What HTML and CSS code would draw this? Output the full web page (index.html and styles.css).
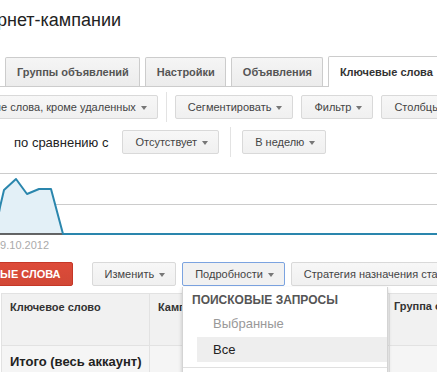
FILE: index.html
```html
<!DOCTYPE html>
<html lang="ru">
<head>
    <meta charset="UTF-8">
    <meta name="viewport" content="width=device-width, initial-scale=1.0">
    <title>Интернет-кампании - Ключевые слова</title>
    <link rel="stylesheet" href="styles.css">
</head>
<body>
    <div class="page">
        <h1 class="title">Интернет-кампании</h1>

        <nav class="tabs">
            <span class="tab tab-cut">Кампании</span>
            <span class="tab">Группы объявлений</span>
            <span class="tab">Настройки</span>
            <span class="tab">Объявления</span>
            <span class="tab active">Ключевые слова</span>
        </nav>

        <div class="toolbar filters">
            <button class="btn btn-status">Все ключевые слова, кроме удаленных <i class="caret"></i></button>
            <span class="sep"></span>
            <button class="btn">Сегментировать <i class="caret"></i></button>
            <button class="btn">Фильтр <i class="caret"></i></button>
            <button class="btn">Столбцы <i class="caret"></i></button>
        </div>

        <div class="toolbar compare">
            <span class="label">по сравнению с</span>
            <button class="btn">Отсутствует <i class="caret"></i></button>
            <span class="sep"></span>
            <button class="btn">В неделю <i class="caret"></i></button>
        </div>

        <div class="chart">
            <svg width="437" height="80" viewBox="0 0 437 80">
                <line x1="0" y1="15.5" x2="437" y2="15.5" stroke="#cccccc" stroke-width="1"/>
                <line x1="0" y1="46.5" x2="437" y2="46.5" stroke="#cccccc" stroke-width="1"/>
                <polygon points="-2,60 0,49 4,32 16,21 27,36 39,31 51,31 63,76 -2,76" fill="#e3f0f7"/>
                <line x1="0" y1="76" x2="63" y2="76" stroke="#333333" stroke-width="1.5"/>
                <polyline points="-2,60 0,49 4,32 16,21 27,36 39,31 51,31 63,76 437,76" fill="none" stroke="#2a86ad" stroke-width="2" stroke-linejoin="round"/>
            </svg>
            <div class="chart-date">09.10.2012</div>
        </div>

        <div class="toolbar actions">
            <button class="btn btn-red">+ Ключевые слова</button>
            <button class="btn">Изменить <i class="caret"></i></button>
            <button class="btn btn-open">Подробности <i class="caret"></i></button>
            <button class="btn">Стратегия назначения ставок <i class="caret"></i></button>
        </div>

        <div class="grid-wrap">
            <table class="grid">
                <thead>
                    <tr>
                        <th class="col-kw">Ключевое слово</th>
                        <th class="col-camp">Кампания</th>
                        <th class="col-group">Группа объявлений</th>
                    </tr>
                </thead>
                <tbody>
                    <tr class="total">
                        <td class="col-kw">Итого (весь аккаунт) <span class="help">?</span></td>
                        <td class="col-camp"></td>
                        <td class="col-group"></td>
                    </tr>
                </tbody>
            </table>

            <div class="menu">
                <div class="menu-head">Поисковые запросы</div>
                <div class="menu-item disabled">Выбранные</div>
                <div class="menu-item hover">Все</div>
                <div class="menu-line"></div>
            </div>
        </div>
    </div>
</body>
</html>
```

FILE: styles.css
```css
html, body { margin: 0; padding: 0; background: #fff; overflow: hidden; }
body { font-family: "Liberation Sans", Arial, sans-serif; color: #222; width: 437px; height: 372px; }
.page { width: 437px; overflow: hidden; }

.title { font-size: 18px; font-weight: normal; line-height: 22px; margin: 9px 0 0 -44px; white-space: nowrap; color: #222; }

.tabs { display: flex; gap: 5px; margin-top: 25px; height: 30px; border-bottom: 1px solid #cccccc; white-space: nowrap; }
.tab { flex-shrink: 0; box-sizing: border-box; height: 29px; margin-top: 1px; padding: 0 10px 0 11px; line-height: 28px; font-size: 11px; font-weight: bold; color: #555; background: linear-gradient(#f5f5f5, #ececec); border: 1px solid #cccccc; border-bottom: none; border-radius: 2px 2px 0 0; }
.tab-cut { margin-left: -77px; width: 77px; overflow: hidden; text-indent: 30px; }
.tab.active { background: #fff; color: #333; height: 31px; margin-top: 0; line-height: 30px; }

.toolbar { display: flex; align-items: center; white-space: nowrap; }
.filters { margin-top: 8px; gap: 8px; }
.compare { margin-top: 11px; gap: 11px; }

.btn { flex-shrink: 0; box-sizing: border-box; height: 24px; padding: 0 10px 0 12px; font-family: inherit; font-size: 11px; color: #444; background: linear-gradient(#f7f7f7, #f0f0f0); border: 1px solid #d9d9d9; border-radius: 2px; display: flex; align-items: center; gap: 5px; }
.btn-status { margin-left: -79px; }
.caret { display: inline-block; width: 0; height: 0; border-top: 4px solid #777; border-left: 3.5px solid transparent; border-right: 3.5px solid transparent; margin-top: 1px; }
.sep { flex-shrink: 0; width: 1px; height: 30px; margin: -3px 0; background: #e3e3e3; }
.label { font-size: 13px; color: #222; margin: 0 3px 0 14px; }

.chart { margin-top: 4px; }
.chart svg { display: block; }
.chart-date { font-size: 11px; color: #aaa; margin-left: -6px; line-height: 14px; }

.actions { margin-top: 10px; gap: 6px; }
.btn-red { margin-left: -71px; margin-right: 13px; color: #fff; font-weight: bold; text-transform: uppercase; background: linear-gradient(#dd4b39, #d14836); border-color: #c53727; padding: 0 11px 0 12px; }
.btn-open { border-color: #7ba3e0; background: #f1f1f1; }

.grid-wrap { position: relative; margin-top: 7px; }
.grid { border-collapse: collapse; table-layout: fixed; width: 560px; margin-left: 1px; }
.grid th, .grid td { box-sizing: border-box; text-align: left; vertical-align: top; border: 1px solid #e2e2e2; white-space: nowrap; overflow: hidden; }
.grid th { height: 52px; padding: 7px 8px 0; font-size: 11px; font-weight: bold; color: #333; background: #f1f1f1; }
.col-kw { width: 148px; }
.col-camp { width: 240px; }
.grid th.col-group { padding: 6px 4px 0; }
.grid td { padding: 8px 8px 0; font-size: 13px; font-weight: bold; color: #222; background: #f5f5f5; height: 40px; }
.help { display: block; width: 9px; height: 9px; margin: 3px 0 0 2px; border: 1px solid #bbb; font-size: 8px; line-height: 9px; text-align: center; color: #999; background: #fff; font-weight: normal; }

.menu { position: absolute; left: 182px; top: -6px; width: 206px; height: 90px; background: #fff; border: 1px solid #d4d4d4; border-top: none; box-shadow: 0 2px 4px rgba(0,0,0,.2); box-sizing: border-box; }
.menu-head { padding: 6px 0 0 9px; font-size: 12px; font-weight: bold; color: #555; text-transform: uppercase; line-height: 14px; }
.menu-item { font-size: 13px; line-height: 25px; padding-left: 30px; }
.menu-item.disabled { color: #999; margin-top: 4px; }
.menu-item.hover { background: #eeeeee; margin-left: 14px; padding-left: 16px; margin-top: 1px; }
.menu-line { border-top: 1px solid #e0e0e0; margin-top: 5px; }
```
